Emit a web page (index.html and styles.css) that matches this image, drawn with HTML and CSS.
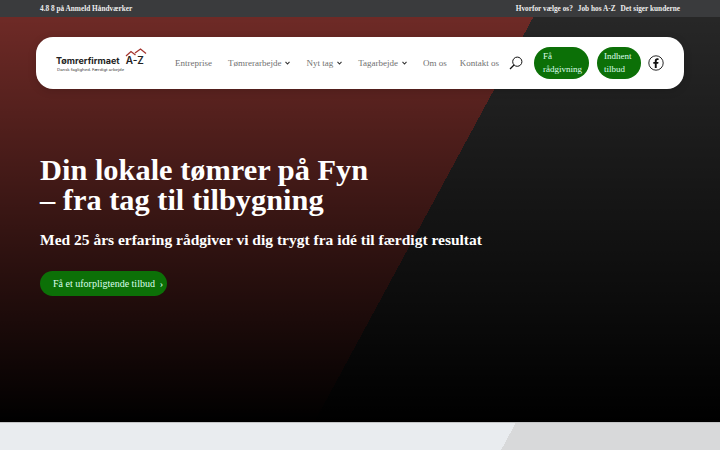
FILE: index.html
```html
<!DOCTYPE html>
<html lang="da">
<head>
  <meta charset="UTF-8" />
  <title>Tømrerfirmaet A-Z</title>
  <link rel="stylesheet" href="styles.css">
</head>
<body>
  <div class="topbar">
    <span>4.8 8 på Anmeld Håndværker</span>
    <div class="topbar-links">
      <a href="#">Hvorfor vælge os?</a>
      <a href="#">Job hos A-Z</a>
      <a href="#">Det siger kunderne</a>
    </div>
  </div>

  <section class="hero">
    <header class="navbar">
      <a class="logo" href="#">
        <span class="logo-name">Tømrerfirmaet <span class="logo-az">A-Z</span></span>
        <span class="logo-tag">Dansk faglighed. Færdigt arbejde</span>
        <svg class="logo-roof" width="22" height="9" viewBox="0 0 22 9" fill="none" stroke="#a5352f" stroke-width="1.3">
          <path d="M1 8 L6 3.5 L10.5 7" />
          <path d="M10 5 L15.5 1 L21 5.5" />
        </svg>
      </a>
      <nav class="menu">
        <a href="#">Entreprise</a>
        <a href="#">Tømrerarbejde <svg class="chev" width="5" height="4" viewBox="0 0 5 4"><path d="M0.5 0.8 L2.5 3 L4.5 0.8" /></svg></a>
        <a href="#">Nyt tag <svg class="chev" width="5" height="4" viewBox="0 0 5 4"><path d="M0.5 0.8 L2.5 3 L4.5 0.8" /></svg></a>
        <a href="#">Tagarbejde <svg class="chev" width="5" height="4" viewBox="0 0 5 4"><path d="M0.5 0.8 L2.5 3 L4.5 0.8" /></svg></a>
        <a href="#">Om os</a>
        <a href="#">Kontakt os</a>
      </nav>
      <svg class="search" width="14" height="14" viewBox="0 0 14 14" fill="none" stroke="#111" stroke-width="1">
        <circle cx="8.3" cy="5.7" r="4.6" />
        <path d="M5 9 L1 13" stroke-width="1.3" />
      </svg>
      <a class="nav-btn btn-first" href="#">Få rådgivning</a>
      <a class="nav-btn btn-second" href="#">Indhent tilbud</a>
      <svg class="fb" width="16" height="16" viewBox="0 0 16 16">
        <circle cx="8" cy="8" r="7.2" fill="#fff" stroke="#111" stroke-width="0.9" />
        <path d="M8.7 13 V8.7 H10.2 L10.5 6.9 H8.7 V5.9 C8.7 5.3 9 5 9.6 5 H10.6 V3.4 C10.2 3.3 9.7 3.3 9.2 3.3 C7.7 3.3 6.8 4.2 6.8 5.7 V6.9 H5.3 V8.7 H6.8 V13 Z" fill="#111" />
      </svg>
    </header>

    <div class="hero-text">
      <h1>Din lokale tømrer på Fyn<br>– fra tag til tilbygning</h1>
      <p>Med 25 års erfaring rådgiver vi dig trygt fra idé til færdigt resultat</p>
      <a class="cta" href="#">Få et uforpligtende tilbud <span class="cta-arrow">›</span></a>
    </div>
  </section>

  <div class="next-section"></div>
</body>
</html>
```

FILE: styles.css
```css
* {
  box-sizing: border-box;
}

html, body {
  margin: 0;
  height: 450px;
  overflow: hidden;
  font-family: "Liberation Serif", "DejaVu Serif", serif;
  background: #e9ecef;
}

a {
  color: inherit;
  text-decoration: none;
}

.topbar {
  height: 17px;
  padding: 0 40px;
  background: #3a3b3d;
  color: #eee;
  font-size: 7.3px;
  font-weight: 700;
  display: flex;
  justify-content: space-between;
  align-items: center;
}

.topbar-links {
  display: flex;
  gap: 5px;
}

.hero {
  height: 405px;
  padding: 20px 36px 0;
  background:
    linear-gradient(to bottom, rgba(0, 0, 0, 0) 0%, rgba(0, 0, 0, 1) 100%),
    linear-gradient(118.4deg, #6e2a26 56.8%, #272727 56.8%);
}

.navbar {
  height: 52px;
  padding: 0 20px;
  background: #fff;
  border-radius: 17px;
  display: flex;
  align-items: center;
  box-shadow: 0 2px 8px rgba(0, 0, 0, 0.15);
}

.logo {
  position: relative;
  flex: none;
  width: 119px;
  padding-top: 2px;
  display: flex;
  flex-direction: column;
  color: #222;
}

.logo-name {
  font-family: "Inter", "Noto Sans", sans-serif;
  font-size: 9px;
  font-weight: 700;
  line-height: 11px;
  white-space: nowrap;
}

.logo-az {
  margin-left: 4px;
  font-size: 10px;
  font-weight: 600;
}

.logo-tag {
  font-family: "Noto Sans", sans-serif;
  font-size: 4.3px;
  line-height: 7px;
  margin-left: 1px;
  color: #333;
}

.logo-roof {
  position: absolute;
  left: 69px;
  top: -5px;
}

.menu {
  flex: none;
  display: flex;
  gap: 16px;
  color: #707070;
  font-size: 9px;
  white-space: nowrap;
}

.menu a {
  display: flex;
  align-items: center;
  gap: 4px;
}

.menu a:last-child {
  margin-left: -3px;
}

.chev {
  fill: none;
  stroke: #333;
  stroke-width: 1.1;
}

.search {
  flex: none;
  margin-left: 10px;
}

.nav-btn {
  flex: none;
  height: 32px;
  padding: 0 8px;
  border-radius: 16px;
  background: #0c7007;
  color: #dfe;
  font-size: 9px;
  line-height: 13px;
  display: flex;
  align-items: center;
}

.btn-first {
  width: 55px;
  margin-left: 11px;
  padding-left: 9px;
}

.btn-second {
  width: 44px;
  margin-left: 8px;
  padding: 0 7px;
}

.fb {
  flex: none;
  margin-left: 7px;
}

.hero-text {
  padding: 66px 0 0 4px;
  color: #fff;
}

.hero-text h1 {
  margin: 0;
  font-size: 30.4px;
  line-height: 30px;
  font-weight: 700;
}

.hero-text p {
  margin: 15px 0 0;
  font-size: 15.5px;
  line-height: 20px;
  font-weight: 700;
}

.cta {
  margin-top: 21px;
  width: 127px;
  height: 25px;
  padding: 0 4px 0 13px;
  border-radius: 13px;
  background: #0c7007;
  color: #dfe;
  font-size: 10px;
  display: flex;
  align-items: center;
  justify-content: space-between;
  white-space: nowrap;
}

.next-section {
  height: 28px;
  border-top: 1px solid #c4c5c6;
  background: linear-gradient(118.4deg, #e9ecef 70.2%, #d8d9da 70.2%);
}
```
